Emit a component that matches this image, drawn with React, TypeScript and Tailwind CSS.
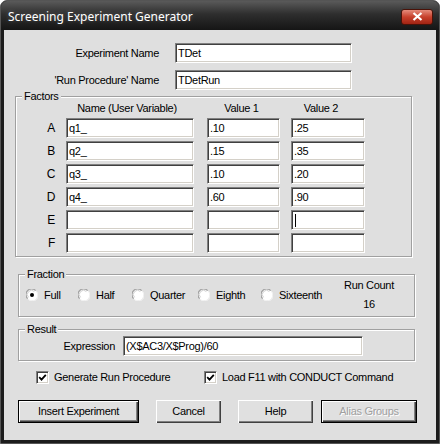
import React from "react";

// ── Bits of classic Win32 chrome ──────────────────────────────────────────────

const sunken =
  "bg-white border border-t-[#808080] border-l-[#808080] border-b-white border-r-white shadow-[inset_1px_1px_0_#404040,inset_-1px_-1px_0_#d4d0c8]";

function TextBox({ value = "", w, cursor }: { value?: string; w: string; cursor?: boolean }) {
  return (
    <div className={`${w} h-[20px] ${sunken} flex items-center px-[2px] whitespace-nowrap overflow-hidden`}>
      {value}
      {cursor && <span className="ml-[1px] w-[1px] h-[13px] bg-black" />}
    </div>
  );
}

function Btn({ label, w, def, disabled }: { label: string; w: string; def?: boolean; disabled?: boolean }) {
  return (
    <div
      className={`${w} h-[23px] flex items-center justify-center bg-[#e0e0e0] ${
        def
          ? "border border-black shadow-[inset_1px_1px_0_#fff,inset_-1px_-1px_0_#404040,inset_-2px_-2px_0_#808080]"
          : "shadow-[inset_1px_1px_0_#fff,inset_-1px_-1px_0_#404040,inset_-2px_-2px_0_#808080]"
      } ${disabled ? "text-[#a0a0a0] [text-shadow:1px_1px_0_#fff]" : ""}`}
    >
      {label}
    </div>
  );
}

function Radio({ label, checked, w }: { label: string; checked?: boolean; w: string }) {
  return (
    <div className={`${w} flex items-center`}>
      <svg width="12" height="12" viewBox="0 0 12 12">
        <circle cx="6" cy="6" r="5.5" fill="#fff" />
        <path d="M1.6 9.6 A5 5 0 0 1 9.6 1.6" stroke="#a0a0a0" strokeWidth="1.2" fill="none" />
        <path d="M2.6 8.4 A4 4 0 0 1 8.4 2.6" stroke="#d0d0d0" strokeWidth="1" fill="none" />
        <path d="M10.4 2.4 A5.3 5.3 0 0 1 2.4 10.4" stroke="#f4f4f4" strokeWidth="1" fill="none" />
        {checked && <circle cx="6" cy="6" r="2" fill="#000" />}
      </svg>
      <span className="ml-[6px]">{label}</span>
    </div>
  );
}

function Check({ label, w }: { label: string; w?: string }) {
  return (
    <div className={`${w ?? ""} flex items-center`}>
      <div className={`w-[13px] h-[13px] ${sunken} flex items-center justify-center`}>
        <svg width="9" height="9" viewBox="0 0 9 9">
          <path d="M1.2 4.2 L3.5 6.6 L7.8 1.8" stroke="#000" strokeWidth="1.8" fill="none" />
        </svg>
      </div>
      <span className="ml-[5px]">{label}</span>
    </div>
  );
}

const group =
  "border border-[#a0a0a0] shadow-[inset_1px_1px_0_#fff,1px_1px_0_#fff] w-[397px]";
const legend = "ml-[6px] px-[2px] leading-[12px] bg-[#dfdfdf]";

const factors: [string, string, string, string][] = [
  ["A", "q1_", ".10", ".25"],
  ["B", "q2_", ".15", ".35"],
  ["C", "q3_", ".10", ".20"],
  ["D", "q4_", ".60", ".90"],
  ["E", "", "", ""],
  ["F", "", "", ""],
];

// ── Dialog ────────────────────────────────────────────────────────────────────

export default function App() {
  return (
    <div className="w-[440px] h-[444px] bg-[#1c1c1c] rounded-t-[7px] overflow-hidden flex flex-col border border-[#555] font-['Liberation_Sans',Arial,sans-serif] text-[11px] tracking-[-0.3px] text-black">
      {/* Title bar */}
      <div className="h-[29px] shrink-0 flex items-center justify-between pt-[2px] bg-[linear-gradient(#5a5a5a,#2e2e2e_45%,#151515)]">
        <span className="pl-[7px] text-white text-[12px] tracking-normal font-['Noto_Sans',sans-serif] [text-shadow:0_0_4px_rgba(255,255,255,0.25)]">
          Screening Experiment Generator
        </span>
        <div className="mr-[6px] w-[32px] h-[16px] rounded-[3px] border border-[#4a1208] bg-[linear-gradient(#e58c7c,#c7402c_50%,#a22413)] flex items-center justify-center">
          <svg width="11" height="9" viewBox="0 0 11 9">
            <path d="M1.5 1 L9.5 8 M9.5 1 L1.5 8" stroke="#fff" strokeWidth="2.2" />
          </svg>
        </div>
      </div>

      {/* Body */}
      <div className="mx-[3px] h-[410px] bg-[#dfdfdf] pt-[13px]">
        <div className="flex items-center">
          <div className="w-[155px] text-right">Experiment Name</div>
          <div className="ml-[16px]">
            <TextBox value="TDet" w="w-[177px]" />
          </div>
        </div>
        <div className="flex items-center mt-[7px]">
          <div className="w-[155px] text-right">'Run Procedure' Name</div>
          <div className="ml-[16px]">
            <TextBox value="TDetRun" w="w-[177px]" />
          </div>
        </div>

        {/* Factors */}
        <fieldset className={`${group} ml-[11px] mt-[0px] pb-[3px]`}>
          <legend className={legend}>Factors</legend>
          <div className="flex leading-[12px]">
            <div className="w-[50px]" />
            <div className="w-[128px] text-center pr-[6px]">Name (User Variable)</div>
            <div className="w-[73px] ml-[13px] text-center pr-[4px]">Value 1</div>
            <div className="w-[74px] ml-[11px] text-center pr-[14px]">Value 2</div>
          </div>
          <div className="mt-[4px] flex flex-col gap-[3px]">
            {factors.map(([k, n, v1, v2]) => (
              <div key={k} className="flex items-center">
                <div className="w-[50px] text-right pr-[11px] text-[12px]">{k}</div>
                <TextBox value={n} w="w-[128px]" />
                <div className="ml-[13px]">
                  <TextBox value={v1} w="w-[73px]" />
                </div>
                <div className="ml-[11px]">
                  <TextBox value={v2} w="w-[74px]" cursor={k === "E"} />
                </div>
              </div>
            ))}
          </div>
        </fieldset>

        {/* Fraction */}
        <fieldset className={`${group} ml-[14px] mt-[11px] pb-[6px]`}>
          <legend className={legend}>Fraction</legend>
          <div className="h-[30px] flex items-center pl-[7px]">
            <Radio label="Full" checked w="w-[52px]" />
            <Radio label="Half" w="w-[54px]" />
            <Radio label="Quarter" w="w-[66px]" />
            <Radio label="Eighth" w="w-[63px]" />
            <Radio label="Sixteenth" w="w-[82px]" />
            <div className="w-[52px] text-center leading-[19px]">
              <div>Run Count</div>
              <div>16</div>
            </div>
          </div>
        </fieldset>

        {/* Result */}
        <fieldset className={`${group} ml-[14px] mt-[6px] pb-[4px]`}>
          <legend className={legend}>Result</legend>
          <div className="mt-[1px] flex items-center">
            <div className="w-[96px] text-right">Expression</div>
            <div className="ml-[8px]">
              <TextBox value="(X$AC3/X$Prog)/60" w="w-[240px]" />
            </div>
          </div>
        </fieldset>

        <div className="mt-[8px] pl-[32px] flex items-center">
          <Check label="Generate Run Procedure" w="w-[168px]" />
          <Check label="Load F11 with CONDUCT Command" />
        </div>

        <div className="mt-[14px] pl-[14px] flex items-center">
          <Btn label="Insert Experiment" w="w-[121px]" def />
          <div className="ml-[17px]">
            <Btn label="Cancel" w="w-[65px]" />
          </div>
          <div className="ml-[17px]">
            <Btn label="Help" w="w-[75px]" />
          </div>
          <div className="ml-[8px]">
            <Btn label="Alias Groups" w="w-[96px]" def disabled />
          </div>
        </div>
      </div>
    </div>
  );
}
